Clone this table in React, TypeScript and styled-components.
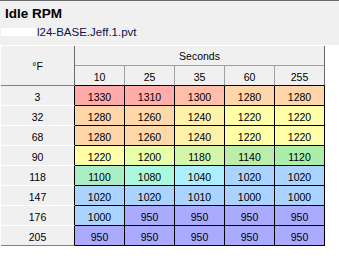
import React from 'react';
import styled, { createGlobalStyle } from 'styled-components';

const GlobalStyle = createGlobalStyle`
  html, body {
    margin: 0;
    padding: 0;
    background: #f0f0f0;
  }
  * {
    box-sizing: border-box;
  }
`;

const Window = styled.div`
  width: 339px;
  height: 265px;
  display: flex;
  flex-direction: column;
  border-top: 1px solid #696969;
  background: #f0f0f0;
  font-family: 'Liberation Sans', Arial, sans-serif;
  color: #000;
  overflow: hidden;
`;

const Header = styled.div`
  height: 44px;
  padding: 5px 0 0 0;
`;

const Title = styled.div`
  font-size: 13.5px;
  line-height: 15px;
  font-weight: bold;
  padding-left: 5px;
`;

const FileRow = styled.div`
  display: flex;
  align-items: flex-start;
  margin-top: 5px;
  font-size: 11.5px;
  line-height: 13px;
  color: #10104a;
`;

const Redacted = styled.span`
  display: block;
  width: 36px;
  height: 8px;
  margin: 2px 0 0 1px;
  background: #fff;
`;

const GridArea = styled.div`
  flex: 1;
  background: #fff;
  padding: 1px 0 0 1px;
`;

const Grid = styled.div`
  display: grid;
  grid-template-columns: 74px repeat(5, 50px);
  grid-template-rows: 20px 20px repeat(8, 20px);
  font-size: 10.5px;
`;

const Cell = styled.div`
  display: flex;
  align-items: center;
  justify-content: center;
  padding-top: 2px;
  line-height: 12px;
`;

const Corner = styled(Cell)`
  grid-row: 1 / span 2;
  background: #f0f0f0;
  border-right: 1px solid #696969;
  border-bottom: 1px solid #808080;
  padding-top: 1px;
`;

const GroupHeader = styled(Cell)`
  grid-column: 2 / span 5;
  background: #f0f0f0;
  border-right: 1px solid #696969;
  border-bottom: 1px solid #a0a0a0;
  padding-top: 0;
`;

const ColHeader = styled(Cell)<{ $last?: boolean }>`
  background: #f0f0f0;
  border-right: 1px solid ${(p) => (p.$last ? '#696969' : '#a0a0a0')};
  border-bottom: 1px solid #000;
`;

const RowHeader = styled(Cell)<{ $last?: boolean }>`
  background: #f0f0f0;
  border-right: 1px solid #000;
  border-bottom: 1px solid ${(p) => (p.$last ? '#808080' : '#ffffff')};
`;

const ValueCell = styled(Cell)<{ $bg: string }>`
  background: ${(p) => p.$bg};
  border-right: 1px solid #000;
  border-bottom: 1px solid #000;
`;

const palette: Record<number, string> = {
  1330: '#ffaaaa',
  1310: '#ffacaa',
  1300: '#ffbeaa',
  1280: '#ffd5aa',
  1260: '#ffd8aa',
  1240: '#fff0aa',
  1220: '#ffffaa',
  1200: '#e8ffaa',
  1180: '#d4f5aa',
  1140: '#bbeeaa',
  1120: '#aaeeaa',
  1100: '#aaeec8',
  1080: '#aaf8dd',
  1040: '#aaeeff',
  1020: '#aad4ff',
  1010: '#aad4ff',
  1000: '#aad4ff',
  950: '#aaaaff',
};

const seconds = [10, 25, 35, 60, 255];

const rows: { temp: number; values: number[] }[] = [
  { temp: 3, values: [1330, 1310, 1300, 1280, 1280] },
  { temp: 32, values: [1280, 1260, 1240, 1220, 1220] },
  { temp: 68, values: [1280, 1260, 1240, 1220, 1220] },
  { temp: 90, values: [1220, 1200, 1180, 1140, 1120] },
  { temp: 118, values: [1100, 1080, 1040, 1020, 1020] },
  { temp: 147, values: [1020, 1020, 1010, 1000, 1000] },
  { temp: 176, values: [1000, 950, 950, 950, 950] },
  { temp: 205, values: [950, 950, 950, 950, 950] },
];

const App: React.FC = () => (
  <>
    <GlobalStyle />
    <Window>
      <Header>
        <Title>Idle RPM</Title>
        <FileRow>
          <Redacted />
          <span>l24-BASE.Jeff.1.pvt</span>
        </FileRow>
      </Header>
      <GridArea>
        <Grid>
          <Corner>°F</Corner>
          <GroupHeader>Seconds</GroupHeader>
          {seconds.map((s, i) => (
            <ColHeader key={s} $last={i === seconds.length - 1}>
              {s}
            </ColHeader>
          ))}
          {rows.map((row, r) => (
            <React.Fragment key={row.temp}>
              <RowHeader $last={r === rows.length - 1}>{row.temp}</RowHeader>
              {row.values.map((v, c) => (
                <ValueCell key={c} $bg={palette[v]}>
                  {v}
                </ValueCell>
              ))}
            </React.Fragment>
          ))}
        </Grid>
      </GridArea>
    </Window>
  </>
);

export default App;
